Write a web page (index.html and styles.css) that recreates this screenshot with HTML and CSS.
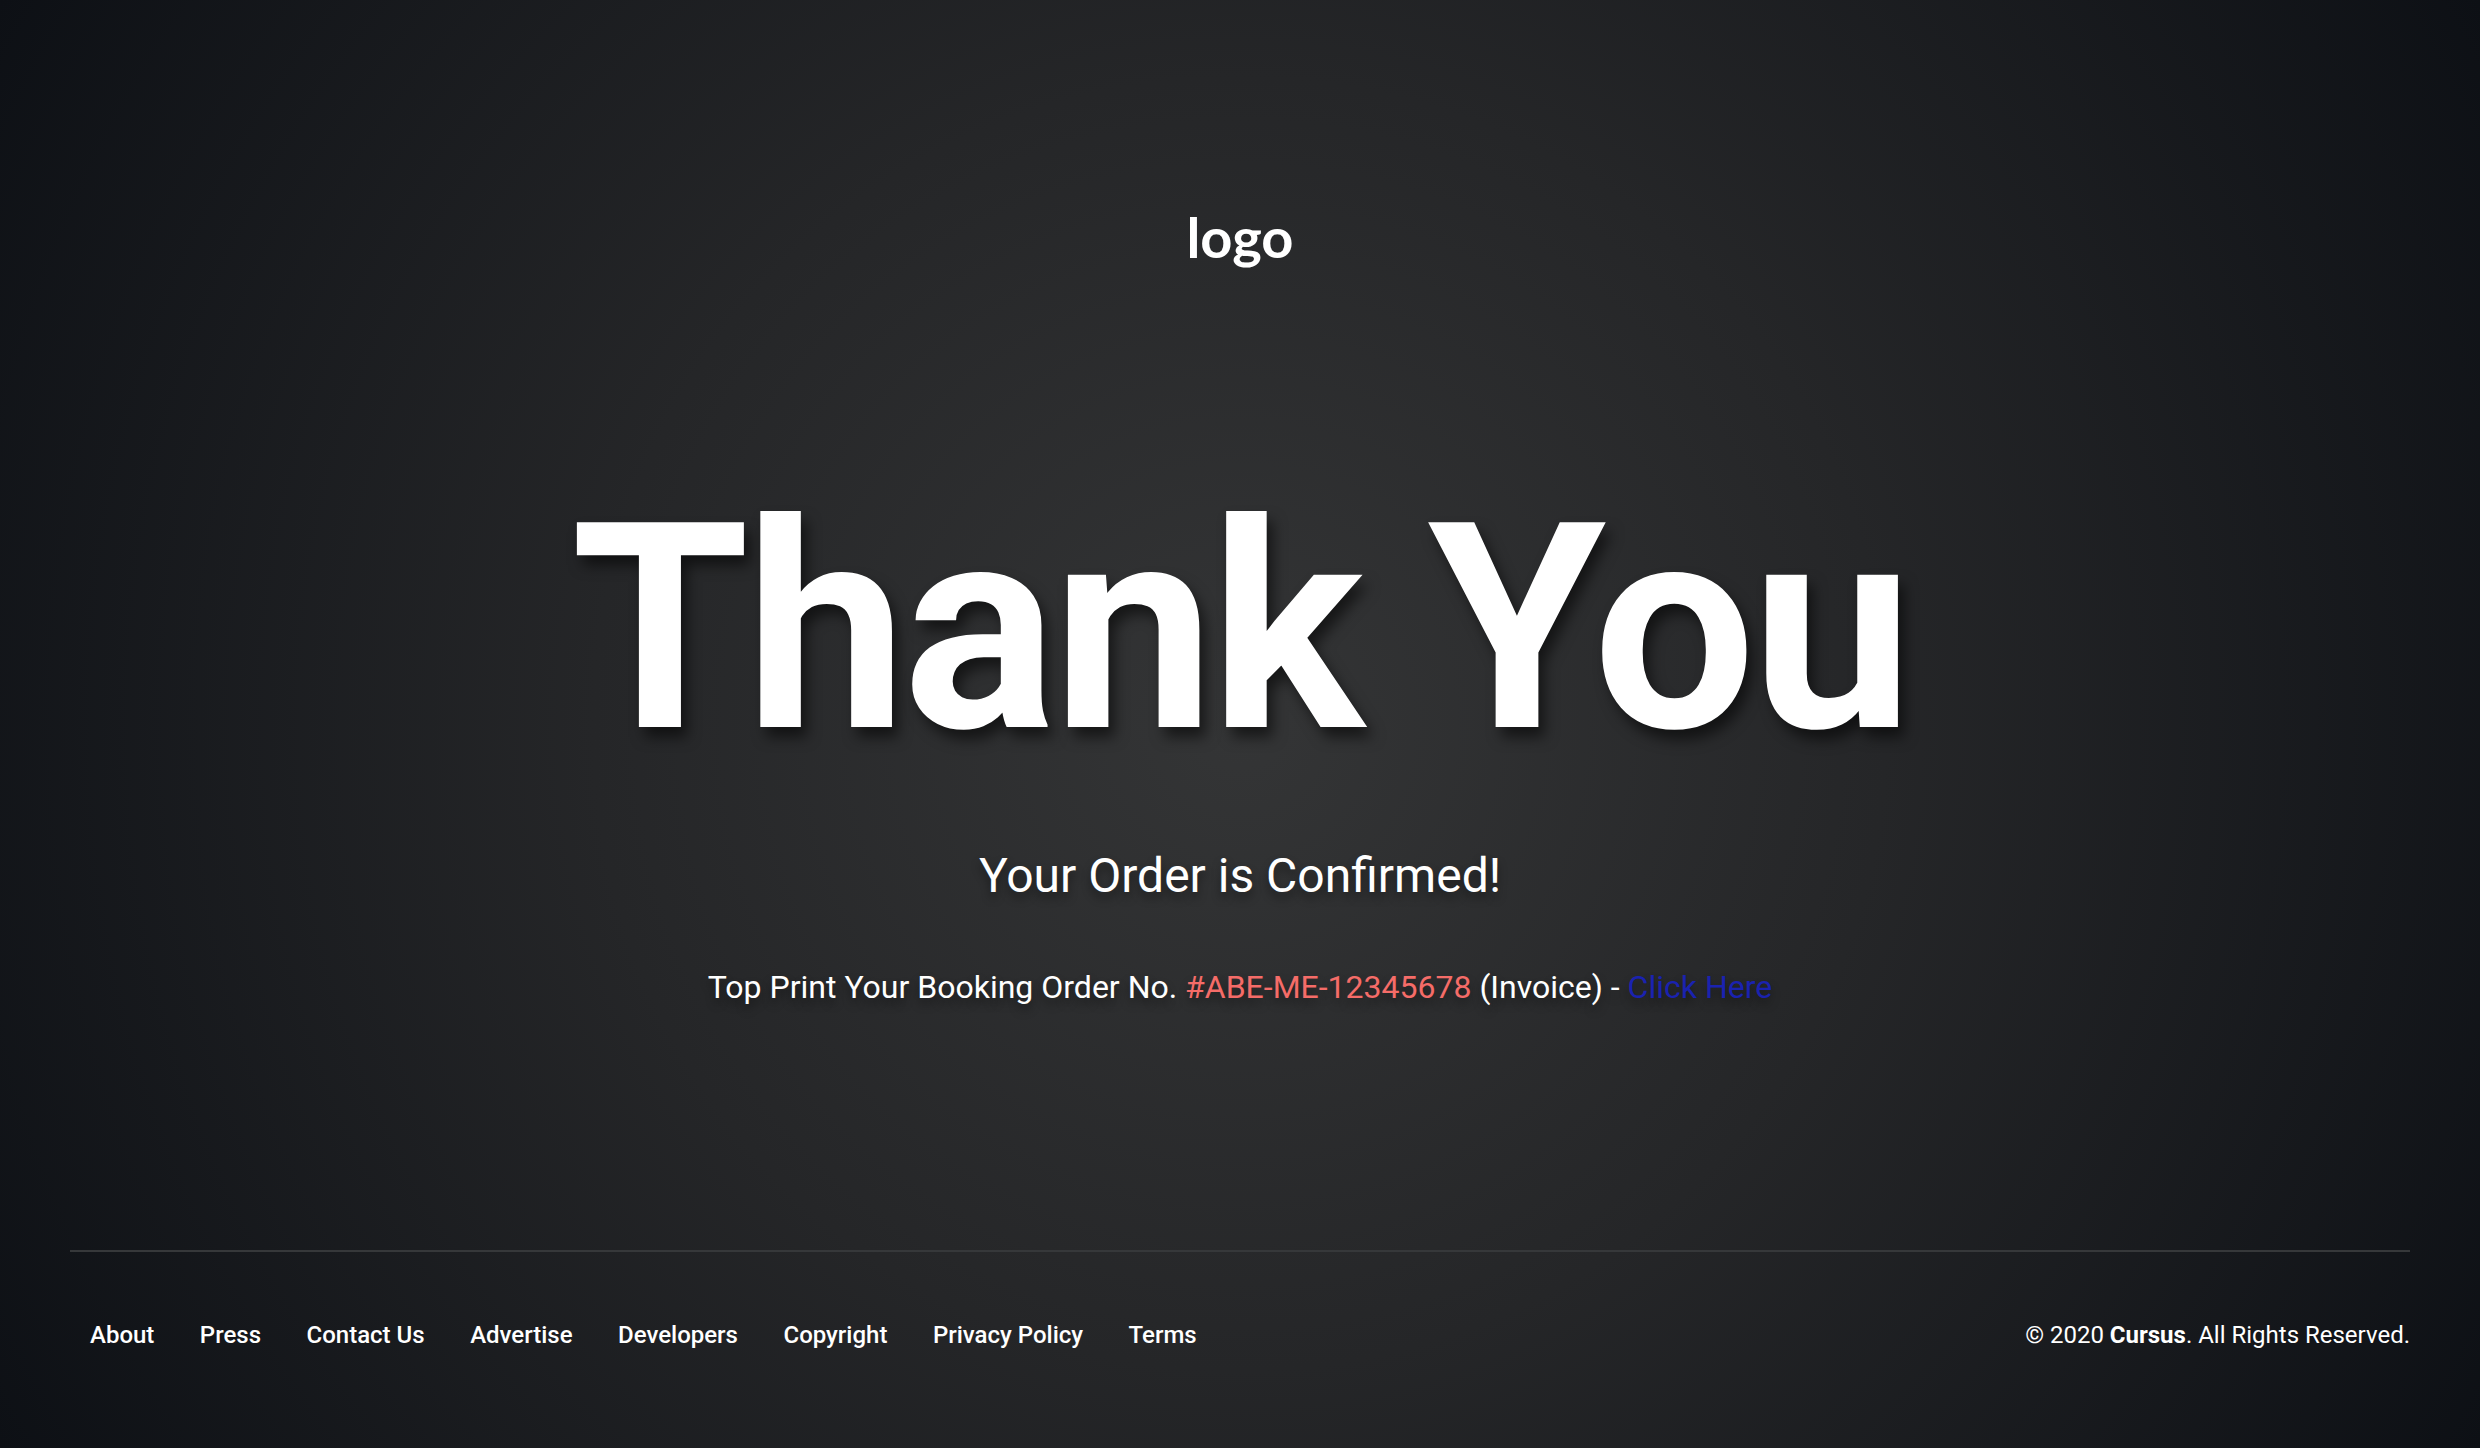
FILE: index.html
```html
<!DOCTYPE html>
<html lang="en">
<head>
<meta charset="utf-8">
<title>Thank You</title>
<link rel="stylesheet" href="styles.css">
</head>
<body>
<div class="page">
  <main class="hero">
    <div class="logo">logo</div>
    <h1 class="title">Thank You</h1>
    <h2 class="subtitle">Your Order is Confirmed!</h2>
    <p class="order">Top Print Your Booking Order No. <span class="order-no">#ABE-ME-12345678</span> (Invoice) - <a class="order-link" href="#">Click Here</a></p>
  </main>
  <footer class="footer">
    <div class="footer-inner">
      <nav class="footer-links">
        <a href="#">About</a>
        <a href="#">Press</a>
        <a href="#">Contact Us</a>
        <a href="#">Advertise</a>
        <a href="#">Developers</a>
        <a href="#">Copyright</a>
        <a href="#">Privacy Policy</a>
        <a href="#">Terms</a>
      </nav>
      <p class="copyright">© 2020 <strong>Cursus</strong>. All Rights Reserved.</p>
    </div>
  </footer>
</div>
</body>
</html>
```

FILE: styles.css
```css
* { box-sizing: border-box; }
html, body { margin: 0; padding: 0; }
body {
  width: 2480px;
  height: 1448px;
  overflow: hidden;
  font-family: Roboto, "Liberation Sans", sans-serif;
  color: #fff;
  background: radial-gradient(circle farthest-corner at 50% 50%, #343536 0%, #252628 45%, #0d1015 100%);
}
.page {
  height: 1448px;
  display: flex;
  flex-direction: column;
}
.hero {
  flex: 1;
  display: flex;
  flex-direction: column;
  align-items: center;
  padding-top: 209px;
}
.logo {
  font-family: Lato, "Open Sans", sans-serif;
  font-weight: 700;
  font-size: 56px;
  line-height: 1;
  color: #fff;
}
.title {
  margin: 220px 0 0;
  font-family: Roboto, sans-serif;
  font-weight: 700;
  font-size: 288px;
  letter-spacing: -4px;
  line-height: 1;
  color: #fff;
  text-shadow: 6px 10px 14px rgba(0, 0, 0, 0.55);
}
.subtitle {
  margin: 79px 0 0;
  font-weight: 400;
  font-size: 48px;
  line-height: 1;
  text-shadow: 0 6px 10px rgba(0, 0, 0, 0.4);
}
.order {
  margin: 71px 0 0;
  font-size: 32px;
  line-height: 1;
  text-shadow: 0 6px 10px rgba(0, 0, 0, 0.4);
}
.order-no { color: #f56c68; }
.order-link {
  color: #1a22b0;
  text-decoration: none;
}
.footer {
  margin: 0 70px;
  border-top: 2px solid #36383a;
  height: 198px;
}
.footer-inner {
  display: flex;
  justify-content: space-between;
  align-items: center;
  padding: 71px 0 0 20px;
}
.footer-links {
  display: flex;
  gap: 45.5px;
}
.footer-links a {
  color: #fff;
  text-decoration: none;
  font-weight: 500;
  font-size: 24px;
  line-height: 1;
}
.copyright {
  margin: 0;
  font-size: 24px;
  line-height: 1;
}
.copyright strong { font-weight: 700; }
```
